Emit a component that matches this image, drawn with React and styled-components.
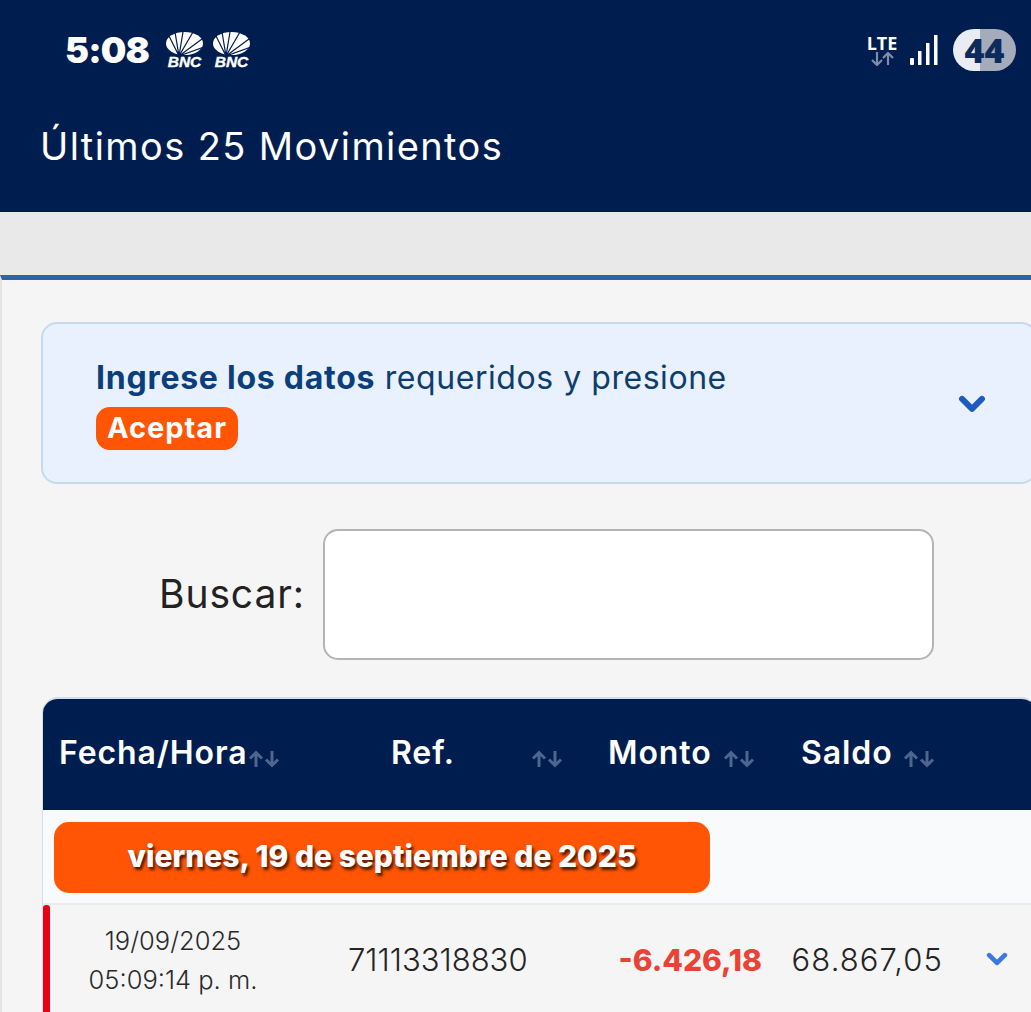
import React from "react";
import styled, { createGlobalStyle } from "styled-components";

const Global = createGlobalStyle`
  html, body { margin: 0; padding: 0; background: #f5f5f6; }
  body { font-family: Inter, "Open Sans", "Liberation Sans", sans-serif; overflow: hidden; }
  * { box-sizing: border-box; }
`;
const Page = styled.div`width: 1031px; height: 1012px; overflow: hidden; display: flex; flex-direction: column;`;
const Header = styled.header`flex: none; height: 212px; background: #001d4f; color: #fff; display: flex; flex-direction: column;`;
const StatusBar = styled.div`height: 100px; display: flex; align-items: flex-start; justify-content: space-between; padding: 28px 15px 0 65px;`;
const StatusLeft = styled.div`display: flex; align-items: center; gap: 17px; height: 44px;`;
const Clock = styled.span`font-size: 36px; font-weight: 900; letter-spacing: -0.8px; line-height: 42px; width: 84px; white-space: nowrap;`;
const Logos = styled.div`display: flex; gap: 10px; margin-top: 0;`;
const LogoBox = styled.div`width: 37px; display: flex; flex-direction: column; align-items: center;`;
const LogoText = styled.span`font: italic 900 15.500px/12px "Liberation Sans", sans-serif; letter-spacing: -0.1px; margin-top: 1px; -webkit-text-stroke: 0.4px #fff;`;
const StatusRight = styled.div`display: flex; align-items: center; height: 44px;`;
const Net = styled.div`display: flex; flex-direction: column; align-items: center; width: 32px; margin-right: 12px;`;
const Lte = styled.span`font: 700 18px/18px "Open Sans", sans-serif;`;
const Signal = styled.svg`margin-right: 15px;`;
const Battery = styled.div`width: 63px; height: 42px; border-radius: 21px; display: flex; align-items: center; justify-content: center; background: linear-gradient(90deg, #e9ecf3 0 43%, #a5abbb 43% 100%); color: #0c2a5c; font: 800 34px/42px "Open Sans", sans-serif;`;
const Title = styled.h1`margin: 0; padding: 24px 0 0 40px; font-size: 38px; line-height: 44px; font-weight: 400; letter-spacing: 1.4px; white-space: nowrap;`;
const Strip = styled.div`flex: none; height: 63px; background: #e9e9e9;`;
const Content = styled.main`flex: 1; border-top: 5px solid #2667a8; border-left: 2px solid #e4e4e6; background: #f5f5f6; padding: 42px 0 0 39px;`;
const Filter = styled.section`height: 162px; margin-right: -6px; background: #e8f1fd; border: 2px solid #c5d9ef; border-radius: 16px; display: flex; align-items: center; justify-content: space-between; padding: 2px 49px 0 53px;`;
const FilterText = styled.div`margin-top: -4px; font-size: 32px; line-height: 49px; color: #0f3d6e; font-weight: 400; letter-spacing: 0.55px; width: 680px;`;
const Strong = styled.strong`font-weight: 700; color: #0a3f7c; letter-spacing: 0.75px;`;
const Pill = styled.span`display: inline-block; background: #ff5504; color: #fff; font-weight: 700; font-size: 29px; line-height: 41px; height: 43px; margin-top: 5px; padding: 0 11px; border-radius: 14px; vertical-align: top; letter-spacing: 1px;`;
const SearchRow = styled.div`display: flex; align-items: center; margin-top: 45px; padding-left: 118px; gap: 18px;`;
const SearchLabel = styled.label`font-size: 39px; line-height: 48px; color: #222; font-weight: 400; letter-spacing: 0.9px; margin-top: -2px;`;
const SearchInput = styled.input`width: 611px; height: 131px; background: #fff; border: 2px solid #b4b4b4; border-radius: 15px; outline: none;`;
const Table = styled.section`margin-top: 37px; margin-left: 1px; margin-right: -6px; background: #f9fafc; border-top: 2px solid #d5dcea; border-left: 1px solid #d9dde4; border-radius: 16px 16px 0 0; overflow: hidden;`;
const HeadRow = styled.div`height: 111px; background: #001d4f; color: #fff; display: flex; align-items: center; font-size: 32px; font-weight: 600;`;
const HeadCell = styled.div`width: ${p => p.$w}px; padding-left: ${p => p.$pl}px; display: flex; align-items: center; gap: ${p => p.$gap || 0}px; padding-bottom: 4px; flex: none; svg { flex: none; margin-top: 12px; }`;
const HeadLabel = styled.span`letter-spacing: 0.9px;`;
const DateRow = styled.div`height: 95px; padding: 12px 0 0 11px; border-bottom: 2px solid #e8ebf0;`;
const DateBadge = styled.div`width: 656px; height: 71px; padding-bottom: 4px; border-radius: 15px; background: #ff5504; color: #fff; font-size: 30px; font-weight: 800; display: flex; align-items: center; justify-content: center; text-shadow: 2px 3px 3px #4d1a00;`;
const DataRow = styled.div`height: 120px; background: #f5f5f6; display: flex; align-items: flex-start; position: relative; padding-top: 16px;`;
const Accent = styled.div`position: absolute; left: 0; top: 0; bottom: 0; width: 7px; background: #e60012; border-radius: 3px 3px 0 0;`;
const WhenCell = styled.div`width: 260px; flex: none; text-align: center; font-size: 25.500px; line-height: 39px; font-weight: 300; color: #2a2a2a;`;
const Cell = styled.div`flex: none; width: ${p => p.$w}px; text-align: ${p => p.$align || "left"}; font-size: ${p => p.$red ? 30 : 31}px; line-height: 50px; height: 50px; margin-top: 14px; color: ${p => p.$red ? "#ea4335" : "#242424"}; font-weight: ${p => p.$red ? 800 : 300}; letter-spacing: ${p => p.$ls || 0}px; white-space: nowrap;`;
const Spacer = styled.div`flex: none; width: ${p => p.$w}px;`;
const ChevronCell = styled.div`flex: none; margin-left: 43px; margin-top: 29px;`;
const ChevronBox = styled.div`flex: none; margin-top: 4px;`;

const Sort = () => (
  <svg width="32" height="20" viewBox="0 0 32 20" fill="none" stroke="#4d668f" strokeWidth="3">
    <path d="M8 18V4M2 9.500 8 3.500l6 6" />
    <path d="M24 2v14M18 10.500l6 6 6-6" />
  </svg>
);
const Chevron = ({ size = 28, color = "#1d5bbf", sw = 6 }) => (
  <svg width={size} height={size * 0.64} viewBox="0 0 28 18" fill="none" stroke={color} strokeWidth={sw} strokeLinecap="round" strokeLinejoin="round">
    <path d="M4 4l10 10L24 4" />
  </svg>
);
const Logo = () => (
  <LogoBox>
    <svg width="37" height="23" viewBox="0 0 37 23">
      <ellipse cx="18.500" cy="11.500" rx="18.500" ry="11.500" fill="#fff" />
      <path d="M13 24 3 4M13 24 9 0M13 24 17 0M13 24 27 0M13 24 36 7M13 24 38 15" stroke="#001d4f" strokeWidth="1.200" fill="none" />
    </svg>
    <LogoText>BNC</LogoText>
  </LogoBox>
);

export default function App() {
  return (
    <Page>
      <Global />
      <Header>
        <StatusBar>
          <StatusLeft>
            <Clock>5:08</Clock>
            <Logos><Logo /><Logo /></Logos>
          </StatusLeft>
          <StatusRight>
            <Net>
              <Lte>LTE</Lte>
              <svg width="24" height="14" viewBox="0 0 24 14" fill="none" stroke="#7e8eaa" strokeWidth="2.200">
                <path d="M7 0v12M2 8l5 5 5-5" /><path d="M18 13V2M13 6l5-5 5 5" />
              </svg>
            </Net>
            <Signal width="28" height="30" viewBox="0 0 28 30" fill="#fff">
              <rect x="0" y="23" width="4" height="7" rx="1" />
              <rect x="8" y="16" width="3.500" height="14" />
              <rect x="16" y="8" width="3.500" height="22" />
              <rect x="24" y="0" width="3.500" height="30" />
            </Signal>
            <Battery>44</Battery>
          </StatusRight>
        </StatusBar>
        <Title>Últimos 25 Movimientos</Title>
      </Header>
      <Strip />
      <Content>
        <Filter>
          <FilterText>
            <Strong>Ingrese los datos</Strong> requeridos y presione <Pill>Aceptar</Pill>
          </FilterText>
          <ChevronBox><Chevron /></ChevronBox>
        </Filter>
        <SearchRow>
          <SearchLabel htmlFor="q">Buscar:</SearchLabel>
          <SearchInput id="q" />
        </SearchRow>
        <Table>
          <HeadRow>
            <HeadCell $w={202} $pl={16}><HeadLabel>Fecha/Hora</HeadLabel><Sort /></HeadCell>
            <HeadCell $w={363} $pl={146} $gap={76}><HeadLabel>Ref.</HeadLabel><Sort /></HeadCell>
            <HeadCell $w={193} $pl={0} $gap={11}><HeadLabel>Monto</HeadLabel><Sort /></HeadCell>
            <HeadCell $w={200} $pl={0} $gap={10}><HeadLabel>Saldo</HeadLabel><Sort /></HeadCell>
          </HeadRow>
          <DateRow><DateBadge>viernes, 19 de septiembre de 2025</DateBadge></DateRow>
          <DataRow>
            <Accent />
            <WhenCell>19/09/2025<br />05:09:14 p. m.</WhenCell>
            <Spacer $w={45} />
            <Cell $w={270}>71113318830</Cell>
            <Cell $w={144} $red $align="right">-6.426,18</Cell>
            <Cell $w={181} $align="right" $ls={1.1}>68.867,05</Cell>
            <ChevronCell><Chevron size={22} color="#3b78e0" /></ChevronCell>
          </DataRow>
        </Table>
      </Content>
    </Page>
  );
}
